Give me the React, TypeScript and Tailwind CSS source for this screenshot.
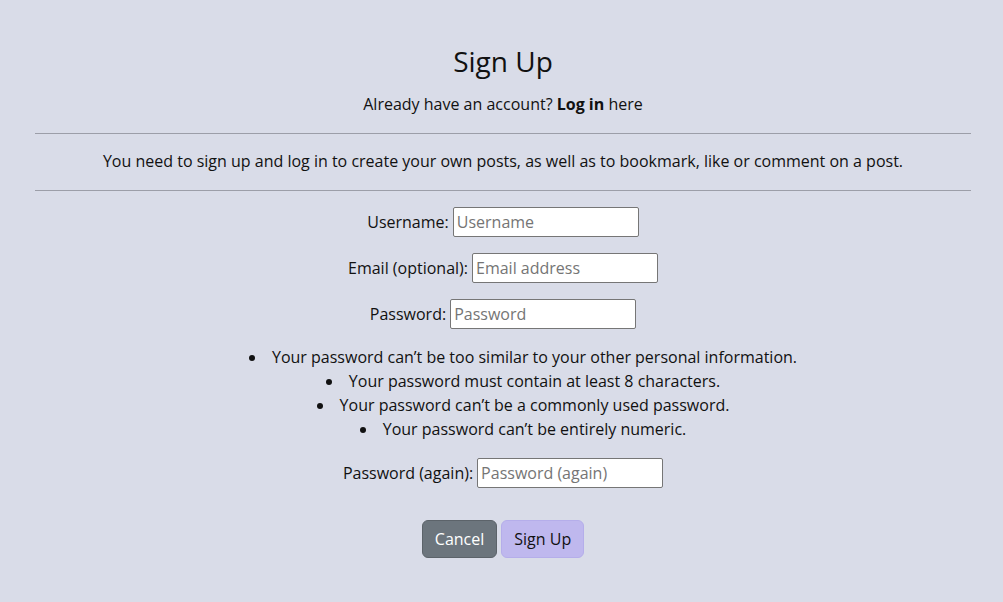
import React from "react";

const font = { fontFamily: '"Open Sans", "Liberation Sans", sans-serif' };

function Row({ label, placeholder, type = "text" }: { label: string; placeholder: string; type?: string }) {
  return (
    <div className="flex items-center justify-center gap-1 h-[30px]">
      <label className="text-[16px] text-[#111]">{label}</label>
      <input
        type={type}
        placeholder={placeholder}
        className="w-[186px] h-[30px] bg-white border border-[#767676] rounded-[2px] px-[3px] text-[16px] placeholder:text-[#757575] outline-none"
      />
    </div>
  );
}

export default function App() {
  return (
    <div className="min-h-[602px] w-full bg-[#d9dce8] text-[#111]" style={font}>
      <div className="pl-[35px] pr-[32px] pt-[42px] flex flex-col items-center text-center">
        <h2 className="text-[28px] leading-[38px] font-normal">Sign Up</h2>
        <p className="mt-[12px] text-[16px] leading-[24px]">
          Already have an account? <b className="font-bold">Log in</b> here
        </p>
        <hr className="w-full mt-[17px] border-t border-[#9c9ea8]" />
        <p className="mt-[15px] text-[16px] leading-[24px]">
          You need to sign up and log in to create your own posts, as well as to bookmark, like or comment on a post.
        </p>
        <hr className="w-full mt-[17px] border-t border-[#9c9ea8]" />
        <div className="mt-[16px] flex flex-col gap-[16px] w-full">
          <Row label="Username:" placeholder="Username" />
          <Row label="Email (optional):" placeholder="Email address" type="email" />
          <Row label="Password:" placeholder="Password" type="password" />
        </div>
        <ul className="mt-[16px] list-disc list-inside pl-10 text-[16px] leading-[24px] w-full">
          <li>Your password can’t be too similar to your other personal information.</li>
          <li>Your password must contain at least 8 characters.</li>
          <li>Your password can’t be a commonly used password.</li>
          <li>Your password can’t be entirely numeric.</li>
        </ul>
        <div className="mt-[17px] w-full">
          <Row label="Password (again):" placeholder="Password (again)" type="password" />
        </div>
        <div className="mt-[32px] flex gap-1 justify-center">
          <button className="h-[38px] px-3 rounded-[6px] bg-[#6c757d] border border-[#5c636a] text-white text-[16px]">
            Cancel
          </button>
          <button className="h-[38px] px-3 rounded-[6px] bg-[#bfb8ee] border border-[#b5aeea] text-[#111] text-[16px]">
            Sign Up
          </button>
        </div>
      </div>
    </div>
  );
}
